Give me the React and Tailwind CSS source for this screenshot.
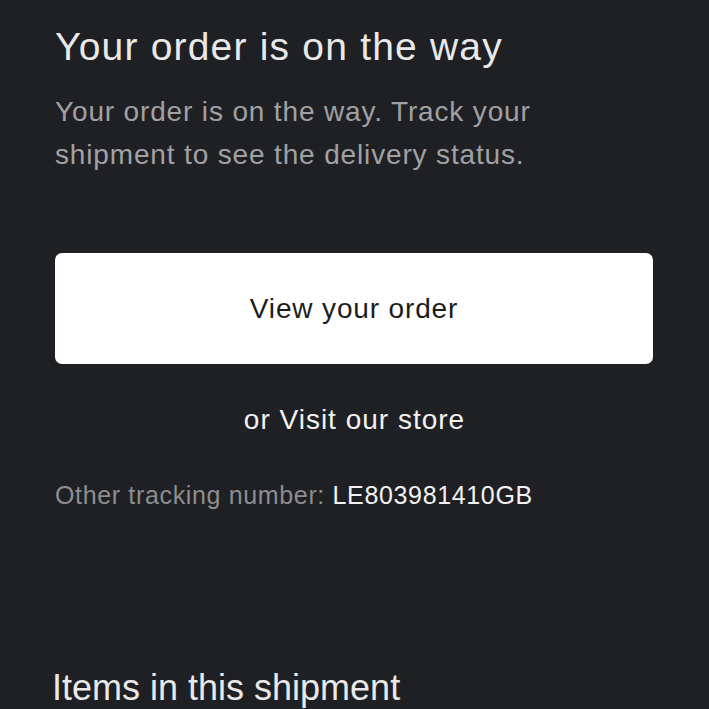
export default function App() {
  return (
    <div
      className="min-h-[709px] w-full overflow-hidden bg-[#1f2024] px-[55px] pt-[24px]"
      style={{ fontFamily: '"Liberation Sans", Arial, sans-serif' }}
    >
      <h1 className="text-[39px] leading-[46px] tracking-[1.2px] text-[#e9e9ea]">
        Your order is on the way
      </h1>
      <p className="mt-[20px] w-[530px] text-[28px] leading-[43px] tracking-[0.85px] text-[#a1a1a4]">
        Your order is on the way. Track your shipment to see the delivery status.
      </p>

      <button className="mt-[77px] flex h-[111px] w-[598px] items-center justify-center rounded-[7px] bg-white text-[28px] tracking-[0.85px] text-[#1c1c1c]">
        View your order
      </button>

      <div className="mt-[37px] text-center text-[28px] leading-[38px] tracking-[1px] text-[#f2f2f2]">
        or Visit our store
      </div>

      <div className="mt-[39px] text-[25px] leading-[34px] tracking-[0.65px]">
        <span className="text-[#8d8d90]">Other tracking number: </span>
        <span className="text-[#f2f2f2]">LE803981410GB</span>
      </div>

      <h2 className="ml-[-3px] mt-[154px] text-[36px] leading-[44px] text-[#e9e9ea]">
        Items in this shipment
      </h2>
    </div>
  );
}
